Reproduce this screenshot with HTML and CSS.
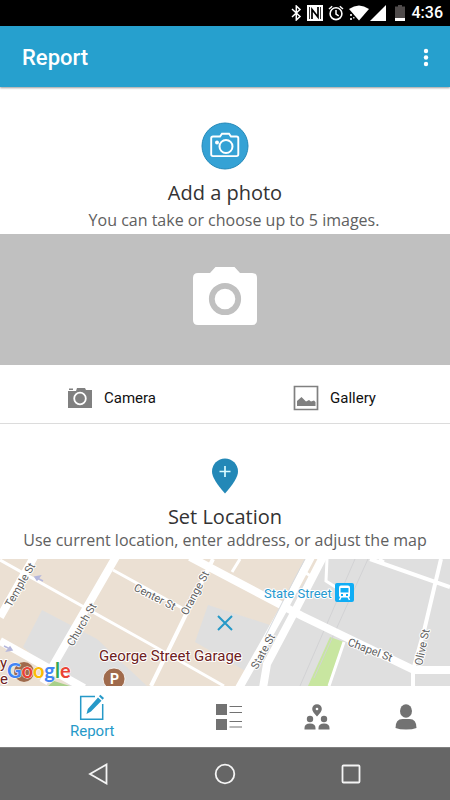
FILE: index.html
```html
<!DOCTYPE html>
<html lang="en">
<head>
  <meta charset="UTF-8" />
  <meta name="viewport" content="width=device-width, initial-scale=1" />
  <title>Report</title>
  <link rel="stylesheet" href="styles.css">
</head>
<body>
<div class="screen">

  <div class="status-bar">
    <!-- bluetooth -->
    <svg width="11" height="16" viewBox="0 0 11 16"><path d="M1 4l8 7.500L5.300 15V1L9 4.500 1 12" fill="none" stroke="#fff" stroke-width="1.500"/></svg>
    <!-- nfc -->
    <svg width="16" height="16" viewBox="0 0 16 16"><path d="M0 0h16v16H0z" fill="#fff"/><path d="M5 14V4.500L11 12V2" fill="none" stroke="#000" stroke-width="1.700"/><path d="M2.500 2v12M13.500 2v12" stroke="#000" stroke-width=".8"/></svg>
    <!-- alarm -->
    <svg width="16" height="16" viewBox="0 0 16 16"><circle cx="8" cy="8.700" r="5.900" fill="none" stroke="#fff" stroke-width="1.600"/><path d="M8 5v4l2.700 1.800M1 4l3.200-2.700M15 4l-3.200-2.700" fill="none" stroke="#fff" stroke-width="1.500"/></svg>
    <!-- wifi -->
    <svg class="wifi" width="20" height="16" viewBox="0 0 20 16"><path d="M0 4Q10-3 20 4L10 15.500z" fill="#fff"/><path d="M1 9h2v2H1zM1 13h2v2H1zM4 12h1.500v1.500H4z" fill="#ccc"/></svg>
    <!-- signal -->
    <svg width="16" height="16" viewBox="0 0 16 16"><path d="M16 0v16H0z" fill="#fff"/></svg>
    <!-- battery -->
    <svg class="battery" width="10" height="16" viewBox="0 0 10 16"><path d="M0 1.500h3V0h4v1.500h3V13H0z" fill="#4f4b4b"/><path d="M0 13h10v3H0z" fill="#fff"/></svg>
    <span class="time">4:36</span>
  </div>

  <header class="app-bar">
    <h1>Report</h1>
    <button class="more" aria-label="More options">
      <svg width="6" height="20" viewBox="0 0 6 20" fill="#fff"><circle cx="3" cy="3" r="2.200"/><circle cx="3" cy="9.500" r="2.200"/><circle cx="3" cy="16" r="2.200"/></svg>
    </button>
  </header>

  <main>
    <section class="step photo">
      <svg class="step-icon" width="48" height="48" viewBox="0 0 48 48">
        <circle cx="24" cy="24" r="23" fill="#35a2d5" stroke="#2388b8"/>
        <path d="M12 14.500h7l2-2.800h7l2 2.800h5.500q1.800 0 1.800 1.800v16q0 1.800-1.800 1.800H12q-1.800 0-1.800-1.800v-16q0-1.800 1.800-1.800z" fill="none" stroke="#fff" stroke-width="1.900"/>
        <circle cx="25" cy="24.500" r="6.500" fill="none" stroke="#fff" stroke-width="2"/>
        <circle cx="16" cy="20.500" r="2" fill="#fff"/>
      </svg>
      <h2>Add a photo</h2>
      <p>You can take or choose up to 5 images.</p>
    </section>

    <div class="preview">
      <svg width="66" height="60" viewBox="0 0 66 60">
        <path d="M6 7h12l5.500-6h19L48 7h12q5 0 5 5v42q0 5-5 5H6q-5 0-5-5V12q0-5 5-5z" fill="#fff"/>
        <circle cx="33" cy="33" r="13.200" fill="#fff" stroke="#c0c0c0" stroke-width="5.800"/>
      </svg>
    </div>

    <div class="actions">
      <button>
        <svg width="26" height="22" viewBox="0 0 26 22">
          <path d="M1 4h8l1-3h8l1 2h6v18H1z" fill="#808080"/>
          <path d="M2 1.500h4V3H2z" fill="#808080"/>
          <circle cx="13" cy="11.500" r="5.800" fill="none" stroke="#fff" stroke-width="1.800"/>
        </svg>
        Camera
      </button>
      <button>
        <svg width="26" height="26" viewBox="0 0 26 26">
          <path d="M1.500 1.500h23v23h-23z" fill="none" stroke="#808080" stroke-width="1.700"/>
          <path d="M4 21v-5l4.500-4 4.500 4.500 3-1.500 2 1.500 3-1 1.500 1.500v4z" fill="#808080"/>
        </svg>
        Gallery
      </button>
    </div>

    <section class="step location">
      <svg class="step-icon" width="28" height="36" viewBox="0 0 28 36">
        <path d="M14 35.500Q1 21 1 13.500a13 13 0 0 1 26 0Q27 21 14 35.500z" fill="#2388b7"/>
        <path d="M14 8v11M8.500 13.500h11" stroke="#d9fbff" stroke-width="1.700"/>
      </svg>
      <h2>Set Location</h2>
      <p>Use current location, enter address, or adjust the map</p>
    </section>

    <div class="map">
      <svg class="map-art" viewBox="0 0 450 127" preserveAspectRatio="xMidYMid slice">
        <path d="M0 0h450v127H0z" fill="#ebe0d3"/>
        <path d="M322 0h128v127H240l44-77z" fill="#dfdfdf"/>
        <path d="M42 51l55 29 50 47H70L23 88zM208 46l62 20-21 48-54-31z" fill="#dfdfdf"/>
        <path d="M330 78l14 5-16 44h-20z" fill="#c8e6a0"/>
        <path d="M54 122l16 5H48z" fill="#a8d08a"/>
        <path d="M355 0l-55 127M368 0l-54 119" fill="none" stroke="#d2d2d4"/>

        <g class="roads">
          <path class="thin" d="M0 1l150 84 74 42M113 11l69 38M240 0l-8 13M327 0l-1 22 11 7M344 83l-15 44M379 0l5 3M300 10l12 8"/>
          <path class="mid" d="M213 0l-62 127M370 0l80 28M441 0l-17 72-11 39v16"/>
          <path class="wide" d="M34-2L0 58M117-4L43 124M0 82l84 47M190-2l112 59 112 54h36"/>
          <path class="wide" d="M239 129l45-80 27-51M263 129l4-24 27-51 29-56"/>
        </g>
        <path d="M305 0l-23 44-17 34" fill="none" stroke="#d5d9de"/>
        <path d="M43 22l-6-3M35 18l5-1-3 4zM4 87l6 3M12 91l-5 1 3-4z" fill="#b5b7dc" stroke="#b5b7dc" stroke-width="1.500"/>

        <g class="street">
          <text transform="translate(11 49) rotate(-60)">Temple St</text>
          <text transform="translate(73 88) rotate(-60)">Church St</text>
          <text transform="translate(133 31) rotate(27)">Center St</text>
          <text transform="translate(187 57) rotate(-62)">Orange St</text>
          <text transform="translate(257 111) rotate(-61)">State St</text>
          <text transform="translate(347 86) rotate(21)">Chapel St</text>
          <text transform="translate(422 107) rotate(-78)">Olive St</text>
        </g>

        <text class="station" x="264" y="39">State Street</text>
        <rect x="335" y="24" width="19" height="19" rx="2" fill="#10adf5"/>
        <path d="M341 26.500h7q2 0 2 2v8q0 2-2 2h-7q-2 0-2-2v-8q0-2 2-2z" fill="#fff"/>
        <path d="M340.500 29h8v4.500h-8zM341 35h2v2h-2zM346 35h2v2h-2z" fill="#10adf5"/>
        <path d="M341 38l-1.500 3M348 38l1.500 3" stroke="#fff" stroke-width="1.500"/>

        <circle cx="24" cy="113" r="10" fill="#9f6a4c"/>
        <circle cx="114" cy="120" r="11" fill="#9f6a4c" stroke="#fff" stroke-width=".8"/>
        <text class="parking" x="110" y="125">P</text>
        <text class="place" x="99" y="102">George Street Garage</text>
        <text class="place" x="0" y="109">y</text>
        <text class="place" x="0" y="125">e</text>
        <text class="brand" x="7" y="119"><tspan fill="#4285f4">G</tspan><tspan fill="#ea4335">o</tspan><tspan fill="#fbbc05">o</tspan><tspan fill="#4285f4">g</tspan><tspan fill="#34a853">l</tspan><tspan fill="#ea4335">e</tspan></text>
      </svg>
      <button class="clear" aria-label="Clear location">
        <svg width="16" height="16" viewBox="0 0 16 16"><path d="M1 1l14 14M15 1L1 15" stroke="#2699c8" stroke-width="2"/></svg>
      </button>
    </div>
  </main>

  <nav class="tabs">
    <a class="tab active" href="#report">
      <svg width="26" height="28" viewBox="0 0 26 28">
        <path d="M16 3.500H1.700v22.800h22V11" fill="none" stroke="#2699c8" stroke-width="1.500"/>
        <path d="M7.500 21l1.300-5L19 4.500l3.500 3.200L12 18.500zM20 3.300l1.300-1.500 3.700 3.300-1.400 1.600z" fill="#2699c8"/>
      </svg>
      Report
    </a>
    <a class="tab" href="#list" aria-label="List">
      <svg width="26" height="26" viewBox="0 0 26 26"><path d="M0 0h11v11H0zM0 15h11v11H0z" fill="#727272"/><path d="M13.500 2.500H26M13.500 8.500H26M13.500 17.500H26M13.500 23H26" stroke="#727272"/></svg>
    </a>
    <a class="tab" href="#community" aria-label="Community">
      <svg width="26" height="26" viewBox="0 0 26 26" fill="#727272">
        <path d="M13 12.500Q8.200 7.500 8.200 5a4.800 4.800 0 0 1 9.600 0q0 2.500-4.800 7.500z"/><circle cx="13" cy="5" r="1.300" fill="#fff"/>
        <circle cx="6" cy="15" r="3.200"/><circle cx="20" cy="15" r="3.200"/>
        <path d="M.5 25.500v-1.500q0-4.500 5.500-4.500t5.500 4.500v1.500zM14.500 25.500v-1.500q0-4.500 5.500-4.500t5.500 4.500v1.500z"/>
      </svg>
    </a>
    <a class="tab" href="#profile" aria-label="Profile">
      <svg width="22" height="26" viewBox="0 0 22 26" fill="#727272"><ellipse cx="11" cy="7" rx="6" ry="6.800"/><path d="M.5 24q0-9 7-9h7q7 0 7 9-4 1.600-10.500 1.600T.5 24z"/></svg>
    </a>
  </nav>

  <div class="system-nav">
    <button aria-label="Back"><svg width="22" height="22" viewBox="0 0 22 22"><path d="M18.500 1.500v19L2 11z"/></svg></button>
    <button aria-label="Home"><svg width="22" height="22" viewBox="0 0 22 22"><circle cx="11" cy="11" r="9.300"/></svg></button>
    <button aria-label="Recent apps"><svg width="22" height="22" viewBox="0 0 22 22"><rect x="2.500" y="2.500" width="17" height="17" rx="1"/></svg></button>
  </div>

</div>
</body>
</html>
```
FILE: styles.css
```css
* {
  box-sizing: border-box;
}

body {
  margin: 0;
  background: #fff;
  font-family: Roboto, "Liberation Sans", sans-serif;
  color: #111;
}

button {
  margin: 0;
  padding: 0;
  border: 0;
  background: none;
  font: inherit;
  color: inherit;
  cursor: pointer;
}

svg {
  display: block;
  flex: none;
}

.screen {
  display: flex;
  flex-direction: column;
  min-height: 100vh;
}

/* top bars */
.status-bar {
  display: flex;
  align-items: center;
  justify-content: flex-end;
  gap: 5px;
  height: 26px;
  padding-right: 7px;
  background: #000;
  color: #fff;
}

.status-bar .wifi {
  margin-right: -4px;
}

.status-bar .battery {
  margin-left: 4px;
}

.time {
  margin-left: 2px;
  font-size: 16px;
  font-weight: 500;
  line-height: 26px;
}

.app-bar {
  position: relative;
  display: flex;
  align-items: center;
  justify-content: space-between;
  height: 61px;
  padding: 2px 21px 0 22px;
  background: #26a0ce;
  box-shadow: 0 1px 2px rgba(0, 0, 0, 0.4);
  color: #fff;
}

.app-bar h1 {
  margin: 0;
  font-size: 22px;
  font-weight: 500;
  line-height: 28px;
}

/* steps */
main {
  flex: 1;
}

.step {
  display: flex;
  flex-direction: column;
  align-items: center;
  padding-top: 35px;
  font-family: "Open Sans", "Noto Sans", sans-serif;
  font-weight: 500;
  text-align: center;
}

.step.location {
  padding-top: 34px;
}

.step h2 {
  margin: 9px 0 0;
  font-size: 20px;
  font-weight: 500;
  line-height: 27px;
  color: #333;
}

.step p {
  margin: 0;
  font-size: 16px;
  line-height: 20px;
  color: #606060;
}

.step.photo p {
  padding: 4px 0 4px 18px;
}

.step.location p {
  padding-bottom: 9px;
}

.preview {
  display: flex;
  justify-content: center;
  padding: 32px 0 39px;
  background: #c0c0c0;
}

.actions {
  display: flex;
  height: 59px;
  padding: 8px 4px 0 0;
  border-bottom: 1px solid #dcdcdc;
}

.actions button {
  display: flex;
  flex: 1;
  align-items: center;
  justify-content: center;
  gap: 11px;
  font-size: 15px;
}

/* map */
.map {
  position: relative;
}

.map-art {
  width: 100%;
  height: 127px;
}

.roads path {
  fill: none;
  stroke: #fff;
}

.roads .thin {
  stroke-width: 3;
}

.roads .mid {
  stroke-width: 4;
}

.roads .wide {
  stroke-width: 8;
}

.map text {
  paint-order: stroke;
  stroke: #fff;
  stroke-width: 2;
  stroke-linejoin: round;
}

.street {
  font-size: 11px;
  fill: #606060;
}

.station {
  font-size: 13px;
  fill: #2699d0;
}

.place {
  font-size: 15px;
  fill: #6e2020;
}

.map .parking {
  font-size: 14px;
  font-weight: 700;
  fill: #fff;
  stroke: none;
}

.map .brand {
  font-family: Lato, Roboto, sans-serif;
  font-size: 20px;
  font-weight: 700;
  stroke-width: 1;
}

.clear {
  position: absolute;
  top: 50%;
  left: 50%;
  padding: 8px;
  transform: translate(-50%, -50%);
}

/* bottom bars */
.tabs {
  display: flex;
  height: 61px;
  background: #fff;
}

.tab {
  display: flex;
  flex: 1;
  flex-direction: column;
  align-items: center;
  justify-content: center;
  font-size: 15px;
  line-height: 20px;
  color: #2699c8;
  text-decoration: none;
}

.tab.active {
  flex: 0 0 41%;
}

.system-nav {
  display: flex;
  justify-content: center;
  height: 53px;
  border-top: 1px solid #808080;
  background: #666;
}

.system-nav button {
  display: flex;
  align-items: center;
  justify-content: center;
  width: 28%;
}

.system-nav svg {
  fill: none;
  stroke: #f4f4f4;
  stroke-width: 1.8;
}
```
